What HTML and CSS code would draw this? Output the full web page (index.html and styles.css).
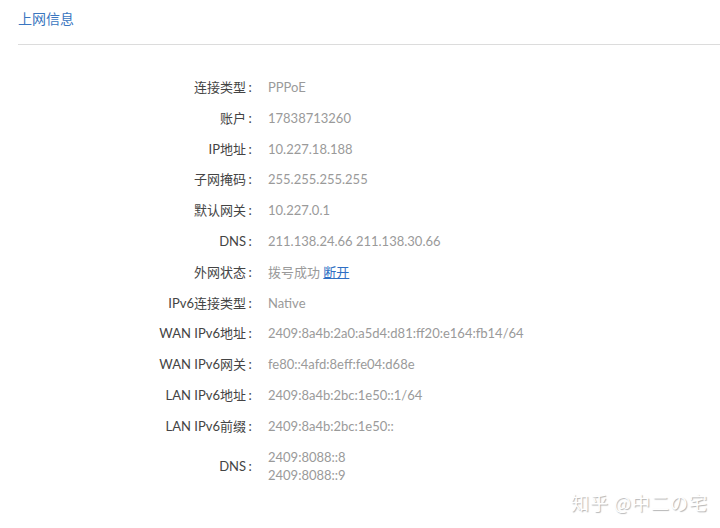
FILE: index.html
```html
<!DOCTYPE html>
<html lang="zh-CN">
<head>
    <meta charset="UTF-8">
    <meta name="viewport" content="width=device-width, initial-scale=1.0">
    <title>上网信息</title>
    <link rel="stylesheet" href="styles.css">
</head>
<body>
    <div class="panel">
        <div class="panel-title">上网信息</div>

        <div class="info-list">
            <div class="label">连接类型<span class="colon">:</span></div>
            <div class="value">PPPoE</div>

            <div class="label">账户<span class="colon">:</span></div>
            <div class="value">17838713260</div>

            <div class="label">IP地址<span class="colon">:</span></div>
            <div class="value">10.227.18.188</div>

            <div class="label">子网掩码<span class="colon">:</span></div>
            <div class="value">255.255.255.255</div>

            <div class="label">默认网关<span class="colon">:</span></div>
            <div class="value">10.227.0.1</div>

            <div class="label">DNS<span class="colon">:</span></div>
            <div class="value">211.138.24.66 211.138.30.66</div>

            <div class="label">外网状态<span class="colon">:</span></div>
            <div class="value">拨号成功 <a class="link" href="#">断开</a></div>

            <div class="label">IPv6连接类型<span class="colon">:</span></div>
            <div class="value">Native</div>

            <div class="label">WAN IPv6地址<span class="colon">:</span></div>
            <div class="value">2409:8a4b:2a0:a5d4:d81:ff20:e164:fb14/64</div>

            <div class="label">WAN IPv6网关<span class="colon">:</span></div>
            <div class="value">fe80::4afd:8eff:fe04:d68e</div>

            <div class="label">LAN IPv6地址<span class="colon">:</span></div>
            <div class="value">2409:8a4b:2bc:1e50::1/64</div>

            <div class="label">LAN IPv6前缀<span class="colon">:</span></div>
            <div class="value">2409:8a4b:2bc:1e50::</div>

            <div class="label">DNS<span class="colon">:</span></div>
            <div class="value">2409:8088::8<br>2409:8088::9</div>
        </div>
    </div>

    <div class="watermark">知乎 @中二の宅</div>
</body>
</html>
```

FILE: styles.css
```css
body {
    margin: 0;
    padding: 0;
    background: #ffffff;
    font-family: Lato, "Noto Sans CJK SC", sans-serif;
    height: 528px;
    overflow: hidden;
    position: relative;
}

.panel {
    padding-left: 18px;
}

.panel-title {
    padding-top: 9px;
    height: 45px;
    box-sizing: border-box;
    border-bottom: 1px solid #dcdcdc;
    color: #3a76c0;
    font-size: 14px;
    line-height: 20px;
}

.info-list {
    display: grid;
    grid-template-columns: 236px 1fr;
    column-gap: 14px;
    row-gap: 12.8px;
    padding-top: 33px;
    font-size: 13px;
    line-height: 18px;
}

.label {
    text-align: right;
    color: #444444;
    align-self: center;
}

.colon {
    display: inline-block;
    width: 8px;
    text-align: center;
}

.value {
    color: #9a9a9a;
}

.link {
    color: #2f6fc4;
    text-decoration: underline;
}

.watermark {
    position: absolute;
    right: 12px;
    bottom: 13px;
    font-family: "Noto Sans CJK SC", sans-serif;
    font-size: 18px;
    color: #ffffff;
    text-shadow: 1px 1px 1px rgba(0, 0, 0, 0.3);
    letter-spacing: 1px;
}
```
